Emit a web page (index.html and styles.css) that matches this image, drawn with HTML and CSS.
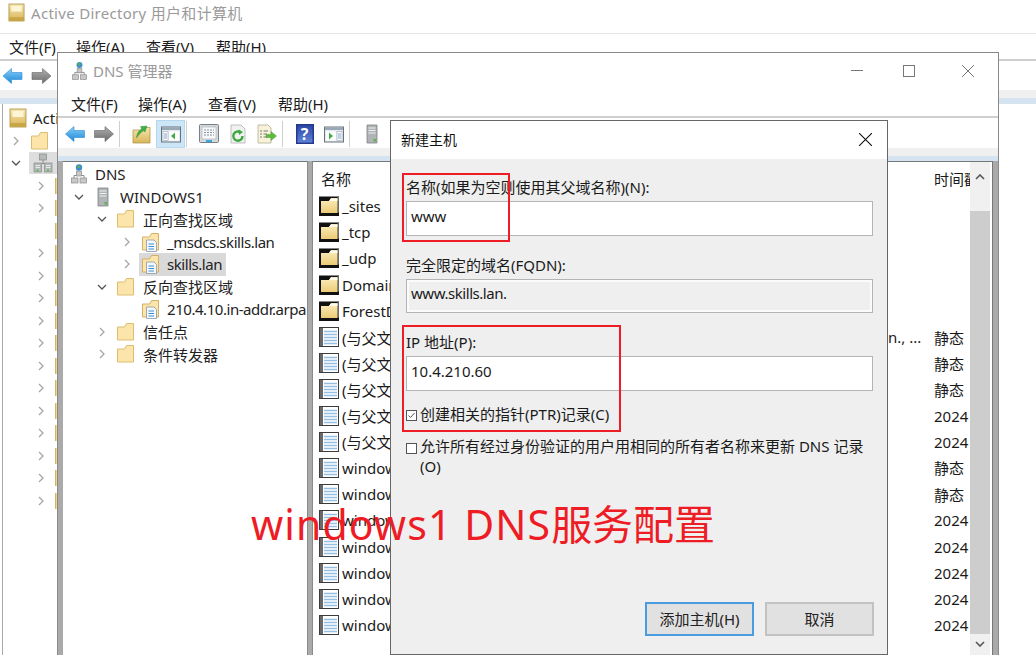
FILE: index.html
```html
<!DOCTYPE html>
<html lang="en">
<head>
    <meta charset="UTF-8">
    <title>DNS 管理器</title>
    <link rel="stylesheet" href="styles.css">
</head>
<body>

    <!-- shared icons -->
    <svg class="defs" width="0" height="0">
        <defs>
            <linearGradient id="blueArrow" x1="0" y1="0" x2="0" y2="1">
                <stop offset="0" stop-color="#8ad0f7"/>
                <stop offset="1" stop-color="#1b86d8"/>
            </linearGradient>
            <linearGradient id="grayArrow" x1="0" y1="0" x2="0" y2="1">
                <stop offset="0" stop-color="#b0b0b0"/>
                <stop offset="1" stop-color="#6c6c6c"/>
            </linearGradient>
            <linearGradient id="gold" x1="0" y1="0" x2="0" y2="1">
                <stop offset="0" stop-color="#f8e6b0"/>
                <stop offset="1" stop-color="#d8b558"/>
            </linearGradient>
            <linearGradient id="folderFill" x1="0" y1="0" x2="0" y2="1">
                <stop offset="0" stop-color="#fbeebd"/>
                <stop offset="1" stop-color="#eccb76"/>
            </linearGradient>
            <linearGradient id="helpFill" x1="0" y1="0" x2="0" y2="1">
                <stop offset="0" stop-color="#2c48a8"/>
                <stop offset="1" stop-color="#5f82d8"/>
            </linearGradient>
            <symbol id="i-back" viewBox="0 0 20 20">
                <path d="M0.5 10 L9 2.5 V6.5 H19.5 V13.5 H9 V17.5 Z" fill="url(#blueArrow)" stroke="#2b8bd6" stroke-width="0.6" stroke-linejoin="round"/>
            </symbol>
            <symbol id="i-forward" viewBox="0 0 20 20">
                <path d="M19.5 10 L11 2.5 V6.5 H0.5 V13.5 H11 V17.5 Z" fill="url(#grayArrow)" stroke="#666" stroke-width="0.6" stroke-linejoin="round"/>
            </symbol>
            <symbol id="i-folder" viewBox="0 0 20 20">
                <path d="M1.5 5 H8.5 L10.5 1.5 H17.5 V18 H1.5 Z" fill="#fbe5ab" stroke="#dcbd72"/>
            </symbol>
            <symbol id="i-zone" viewBox="0 0 20 20">
                <path d="M1.5 5 H8.5 L10.5 1.5 H17.5 V18 H1.5 Z" fill="#fbe5ab" stroke="#d2b066"/>
                <path d="M5.5 8 H13 L15.5 10.5 V19.5 H5.5 Z" fill="#f4f8fc" stroke="#8a97a6" stroke-width="0.8"/>
                <path d="M7.5 12 H13 M7.5 14.5 H13 M7.5 17 H13" stroke="#3f8fd0" stroke-width="1"/>
            </symbol>
            <symbol id="i-subfolder" viewBox="0 0 20 20">
                <rect y="0.5" width="20" height="19.5" fill="#111"/>
                <rect x="18.5" y="0.5" width="1.5" height="16" fill="#6b6b6b"/>
                <path d="M2 5 H10 L12 2.2 H18.5 V17 H2 Z" fill="url(#folderFill)"/>
                <path d="M12 2.2 H18.5 V5 H10 Z" fill="#fffbe8"/>
            </symbol>
            <symbol id="i-record" viewBox="0 0 20 20">
                <rect x="0.5" y="0.5" width="19" height="19" fill="#fff" stroke="#3c3c3c"/>
                <rect x="1" y="1" width="3" height="18" fill="#6a6a6a"/>
                <path d="M5 4.5 H18 M5 7.5 H18 M5 10.5 H18 M5 13.5 H18 M5 16.5 H18" stroke="#93bfe4" stroke-width="1.6"/>
            </symbol>
            <symbol id="i-server" viewBox="0 0 12 20">
                <path d="M1 1 H11 V19 H1 Z" fill="#b0b4b6" stroke="#7d8183" stroke-width="0.8"/>
                <path d="M2.5 4 H9.5 M2.5 6.5 H9.5 M2.5 9 H9.5" stroke="#eef0f0" stroke-width="1.2"/>
                <rect x="7.5" y="15" width="2.5" height="2.5" fill="#5fb24a"/>
            </symbol>
            <symbol id="i-network" viewBox="0 0 16 20">
                <circle cx="8" cy="3.5" r="3.2" fill="#3d8fd0"/>
                <path d="M6 2.5 C7 1 9 1.5 9.5 3 C8 5 7 4 6 2.5 Z" fill="#5fb24a"/>
                <path d="M8 7 V12 M3 14 V11.5 H13 V14" stroke="#8b8b8b" fill="none"/>
                <rect x="5.5" y="7" width="5" height="5" fill="#c8c8c8" stroke="#8b8b8b" stroke-width="0.7"/>
                <rect x="0.5" y="14" width="6.5" height="5" fill="#c8c8c8" stroke="#8b8b8b" stroke-width="0.7"/>
                <rect x="9" y="14" width="6.5" height="5" fill="#c8c8c8" stroke="#8b8b8b" stroke-width="0.7"/>
            </symbol>
            <symbol id="i-domains" viewBox="0 0 20 20">
                <path d="M10 6 V11 M4 13 V10.5 H16 V13" stroke="#8b8b8b" fill="none"/>
                <rect x="6.5" y="1" width="7" height="6" fill="#b4b9b9" stroke="#8b8b8b" stroke-width="0.7"/>
                <rect x="1" y="10" width="7.5" height="9" fill="#b4b9b9" stroke="#8b8b8b" stroke-width="0.7"/>
                <rect x="11.5" y="10" width="7.5" height="9" fill="#b4b9b9" stroke="#8b8b8b" stroke-width="0.7"/>
                <path d="M2.5 12.5 H7 M13 12.5 H17.5 M2.5 14.5 H7 M13 14.5 H17.5" stroke="#eceeee" stroke-width="0.9"/>
                <path d="M3.5 17.5 H5.5 M14 17.5 H16" stroke="#53c23a" stroke-width="1.6"/>
            </symbol>
            <symbol id="i-book" viewBox="0 0 18 20">
                <rect x="1" y="1" width="16" height="18" fill="url(#gold)" stroke="#a98c3c" stroke-width="0.8"/>
                <rect x="3.5" y="3" width="11" height="6" fill="#fdf6d6"/>
                <rect x="1" y="15" width="16" height="4" fill="#c8a646"/>
            </symbol>
            <symbol id="i-up" viewBox="0 0 20 20">
                <path d="M1 6 H9 L10 3.5 H18 V19 H1 Z" fill="url(#gold)" stroke="#a98c3c" stroke-width="0.7"/>
                <path d="M4.5 14 C5 9 7 6 10 5.2 L8.5 2.5 L15 2 L13 8 L11.5 6.8 C9 8 7 10.5 4.5 14 Z" fill="#3fae46" stroke="#2b8c33" stroke-width="0.4"/>
            </symbol>
            <symbol id="i-pane-left" viewBox="0 0 20 20">
                <rect x="0.5" y="3" width="19" height="15" fill="#e6ebf1" stroke="#68727c"/>
                <rect x="1" y="3.5" width="18" height="2.5" fill="#9aa7b4"/>
                <rect x="2" y="7.5" width="5" height="9" fill="#fff" stroke="#9aa7b4" stroke-width="0.6"/>
                <path d="M3 10 H6 M3 12 H6 M3 14 H6" stroke="#5a8fc4" stroke-width="0.8"/>
                <rect x="8" y="7.5" width="10" height="9" fill="#fff"/>
                <path d="M14 8.5 V15.5 L10 12 Z" fill="#3fae46"/>
            </symbol>
            <symbol id="i-pane-right" viewBox="0 0 20 20">
                <rect x="0.5" y="3" width="19" height="15" fill="#e6ebf1" stroke="#68727c"/>
                <rect x="1" y="3.5" width="18" height="2.5" fill="#9aa7b4"/>
                <rect x="13" y="7.5" width="5" height="9" fill="#fff" stroke="#9aa7b4" stroke-width="0.6"/>
                <path d="M14 10 H17 M14 12 H17 M14 14 H17" stroke="#5a8fc4" stroke-width="0.8"/>
                <rect x="2" y="7.5" width="10" height="9" fill="#fff"/>
                <path d="M5 8.5 V15.5 L9 12 Z" fill="#3fae46"/>
            </symbol>
            <symbol id="i-props" viewBox="0 0 20 20">
                <rect x="0.5" y="0.5" width="19" height="18" rx="1" fill="#d5d9dc" stroke="#7a7f84"/>
                <rect x="3" y="3" width="14" height="12" fill="#f6f8fa" stroke="#a7adb3" stroke-width="0.6"/>
                <path d="M5 6 H15 M5 8.5 H15 M5 11 H15" stroke="#7c8791" stroke-width="0.9" stroke-dasharray="2 1"/>
                <rect x="7" y="16" width="6" height="2" fill="#38a7e0"/>
            </symbol>
            <symbol id="i-refresh" viewBox="0 0 20 20">
                <path d="M3 1 H13 L17 5 V19 H3 Z" fill="#f1f2f0" stroke="#a5a8a6" stroke-width="0.7"/>
                <path d="M14.5 12 A4.6 4.6 0 1 1 12.5 8.3" fill="none" stroke="#3aa83f" stroke-width="2.4"/>
                <path d="M10.5 5.5 L15 8 L11 11 Z" fill="#3aa83f"/>
            </symbol>
            <symbol id="i-export" viewBox="0 0 20 20">
                <path d="M1 1 H11 L14 4 V19 H1 Z" fill="#f8f3d8" stroke="#a8a58a" stroke-width="0.7"/>
                <path d="M3 7 H5 M6.5 7 H11 M3 10 H5 M6.5 10 H10 M3 13 H5 M6.5 13 H10" stroke="#6c7076" stroke-width="0.9"/>
                <path d="M9 10.5 H14 V7.5 L19.5 12 L14 16.5 V13.5 H9 Z" fill="#5dbb3f" stroke="#3f962a" stroke-width="0.4"/>
            </symbol>
            <symbol id="i-help" viewBox="0 0 18 20">
                <rect x="0" y="0" width="18" height="20" fill="#24388c"/>
                <rect x="1.5" y="1.5" width="15" height="17" fill="url(#helpFill)"/>
            </symbol>
            <symbol id="chev-r" viewBox="0 0 8 10"><path d="M2 1 L6 5 L2 9" fill="none" stroke="#a6a6a6" stroke-width="1.3"/></symbol>
            <symbol id="chev-d" viewBox="0 0 10 8"><path d="M1 2 L5 6 L9 2" fill="none" stroke="#555" stroke-width="1.3"/></symbol>
        </defs>
    </svg>

    <div class="desktop">

        <!-- back window: Active Directory -->
        <section class="window ad-window">
            <header class="titlebar">
                <svg class="ad-title-icon"><use href="#i-book"/></svg>
                <span class="title-text ad-title-text">Active Directory 用户和计算机</span>
            </header>
            <nav class="menubar">
                <span>文件(F)</span>
                <span>操作(A)</span>
                <span>查看(V)</span>
                <span>帮助(H)</span>
            </nav>
            <div class="toolbar ad-toolbar">
                <svg class="arrow"><use href="#i-back"/></svg>
                <svg class="arrow"><use href="#i-forward"/></svg>
            </div>
            <div class="band"></div>
            <div class="ad-tree">
                <div class="ad-row ad-root"><svg class="ad-book"><use href="#i-book"/></svg><span>Active Directory</span></div>
                <div class="ad-row ad-lvl1"><svg class="chev"><use href="#chev-r"/></svg><svg class="icon"><use href="#i-folder"/></svg></div>
                <div class="ad-row ad-lvl1"><svg class="chev"><use href="#chev-d"/></svg><span class="ad-selected"><svg class="icon"><use href="#i-domains"/></svg></span></div>
                <div class="ad-row ad-lvl2"><svg class="chev"><use href="#chev-r"/></svg><span class="sliver"></span></div>
                <div class="ad-row ad-lvl2"><svg class="chev"><use href="#chev-r"/></svg><span class="sliver"></span></div>
                <div class="ad-row ad-lvl2"><svg class="chev blank"></svg><span class="sliver"></span></div>
                <div class="ad-row ad-lvl2"><svg class="chev"><use href="#chev-r"/></svg><span class="sliver"></span></div>
                <div class="ad-row ad-lvl2"><svg class="chev"><use href="#chev-r"/></svg><span class="sliver"></span></div>
                <div class="ad-row ad-lvl2"><svg class="chev"><use href="#chev-r"/></svg><span class="sliver"></span></div>
                <div class="ad-row ad-lvl2"><svg class="chev"><use href="#chev-r"/></svg><span class="sliver"></span></div>
                <div class="ad-row ad-lvl2"><svg class="chev"><use href="#chev-r"/></svg><span class="sliver"></span></div>
                <div class="ad-row ad-lvl2"><svg class="chev"><use href="#chev-r"/></svg><span class="sliver"></span></div>
                <div class="ad-row ad-lvl2"><svg class="chev"><use href="#chev-r"/></svg><span class="sliver"></span></div>
                <div class="ad-row ad-lvl2"><svg class="chev"><use href="#chev-r"/></svg><span class="sliver"></span></div>
                <div class="ad-row ad-lvl2"><svg class="chev"><use href="#chev-r"/></svg><span class="sliver"></span></div>
                <div class="ad-row ad-lvl2"><svg class="chev"><use href="#chev-r"/></svg><span class="sliver"></span></div>
                <div class="ad-row ad-lvl2"><svg class="chev"><use href="#chev-r"/></svg><span class="sliver"></span></div>
                <div class="ad-row ad-lvl2"><svg class="chev"><use href="#chev-r"/></svg><span class="sliver"></span></div>
            </div>
        </section>

        <!-- middle window: DNS manager -->
        <section class="window dns-window">
            <header class="titlebar dns-titlebar">
                <svg class="dns-title-icon"><use href="#i-network"/></svg>
                <span class="title-text">DNS 管理器</span>
                <div class="win-controls">
                    <span class="ctl-min"></span>
                    <span class="ctl-max"></span>
                    <svg class="ctl-close" viewBox="0 0 12 12"><path d="M0 0 L12 12 M12 0 L0 12" stroke="#777" fill="none"/></svg>
                </div>
            </header>
            <nav class="menubar dns-menubar">
                <span>文件(F)</span>
                <span>操作(A)</span>
                <span>查看(V)</span>
                <span>帮助(H)</span>
            </nav>
            <div class="toolbar dns-toolbar">
                <span class="tool"><svg><use href="#i-back"/></svg></span>
                <span class="tool"><svg><use href="#i-forward"/></svg></span>
                <span class="tool-sep"></span>
                <span class="tool"><svg><use href="#i-up"/></svg></span>
                <span class="tool tool-active"><svg><use href="#i-pane-left"/></svg></span>
                <span class="tool-sep"></span>
                <span class="tool"><svg><use href="#i-props"/></svg></span>
                <span class="tool"><svg><use href="#i-refresh"/></svg></span>
                <span class="tool"><svg><use href="#i-export"/></svg></span>
                <span class="tool-sep"></span>
                <span class="tool"><svg class="help-icon"><use href="#i-help"/></svg><b class="help-mark">?</b></span>
                <span class="tool"><svg><use href="#i-pane-right"/></svg></span>
                <span class="tool-sep"></span>
                <span class="tool"><svg><use href="#i-server"/></svg></span>
            </div>
            <div class="band"></div>
            <div class="dns-body">
                <aside class="dns-tree">
                    <div class="node node-root"><svg class="icon"><use href="#i-network"/></svg><span class="node-label">DNS</span></div>
                    <div class="node lvl1"><svg class="chev"><use href="#chev-d"/></svg><svg class="icon"><use href="#i-server"/></svg><span class="node-label">WINDOWS1</span></div>
                    <div class="node lvl2"><svg class="chev"><use href="#chev-d"/></svg><svg class="icon"><use href="#i-folder"/></svg><span class="node-label">正向查找区域</span></div>
                    <div class="node lvl3"><svg class="chev"><use href="#chev-r"/></svg><svg class="icon"><use href="#i-zone"/></svg><span class="node-label tight">_msdcs.skills.lan</span></div>
                    <div class="node lvl3"><svg class="chev"><use href="#chev-r"/></svg><span class="node-selected"><svg class="icon"><use href="#i-zone"/></svg><span class="node-label tight">skills.lan</span></span></div>
                    <div class="node lvl2"><svg class="chev"><use href="#chev-d"/></svg><svg class="icon"><use href="#i-folder"/></svg><span class="node-label">反向查找区域</span></div>
                    <div class="node lvl3"><svg class="chev blank"></svg><svg class="icon"><use href="#i-zone"/></svg><span class="node-label tight">210.4.10.in-addr.arpa</span></div>
                    <div class="node lvl2"><svg class="chev"><use href="#chev-r"/></svg><svg class="icon"><use href="#i-folder"/></svg><span class="node-label">信任点</span></div>
                    <div class="node lvl2"><svg class="chev"><use href="#chev-r"/></svg><svg class="icon"><use href="#i-folder"/></svg><span class="node-label">条件转发器</span></div>
                </aside>
                <main class="dns-list">
                    <div class="list-content">
                        <div class="list-head">
                            <span class="col-name">名称</span>
                            <span class="col-data"></span>
                            <span class="col-time">时间戳</span>
                        </div>
                        <div class="list-row"><span class="col-name"><svg><use href="#i-subfolder"/></svg>_sites</span><span class="col-data"></span><span class="col-time"></span></div>
                        <div class="list-row"><span class="col-name"><svg><use href="#i-subfolder"/></svg>_tcp</span><span class="col-data"></span><span class="col-time"></span></div>
                        <div class="list-row"><span class="col-name"><svg><use href="#i-subfolder"/></svg>_udp</span><span class="col-data"></span><span class="col-time"></span></div>
                        <div class="list-row"><span class="col-name"><svg><use href="#i-subfolder"/></svg>DomainDnsZones</span><span class="col-data"></span><span class="col-time"></span></div>
                        <div class="list-row"><span class="col-name"><svg><use href="#i-subfolder"/></svg>ForestDnsZones</span><span class="col-data"></span><span class="col-time"></span></div>
                        <div class="list-row"><span class="col-name"><svg><use href="#i-record"/></svg>(与父文件夹相同)</span><span class="col-data">n., ...</span><span class="col-time">静态</span></div>
                        <div class="list-row"><span class="col-name"><svg><use href="#i-record"/></svg>(与父文件夹相同)</span><span class="col-data"></span><span class="col-time">静态</span></div>
                        <div class="list-row"><span class="col-name"><svg><use href="#i-record"/></svg>(与父文件夹相同)</span><span class="col-data"></span><span class="col-time">静态</span></div>
                        <div class="list-row"><span class="col-name"><svg><use href="#i-record"/></svg>(与父文件夹相同)</span><span class="col-data"></span><span class="col-time">2024</span></div>
                        <div class="list-row"><span class="col-name"><svg><use href="#i-record"/></svg>(与父文件夹相同)</span><span class="col-data"></span><span class="col-time">2024</span></div>
                        <div class="list-row"><span class="col-name"><svg><use href="#i-record"/></svg>windows1</span><span class="col-data"></span><span class="col-time">静态</span></div>
                        <div class="list-row"><span class="col-name"><svg><use href="#i-record"/></svg>windows1</span><span class="col-data"></span><span class="col-time">静态</span></div>
                        <div class="list-row"><span class="col-name"><svg><use href="#i-record"/></svg>windows1</span><span class="col-data"></span><span class="col-time">2024</span></div>
                        <div class="list-row"><span class="col-name"><svg><use href="#i-record"/></svg>windows1</span><span class="col-data"></span><span class="col-time">2024</span></div>
                        <div class="list-row"><span class="col-name"><svg><use href="#i-record"/></svg>windows1</span><span class="col-data"></span><span class="col-time">2024</span></div>
                        <div class="list-row"><span class="col-name"><svg><use href="#i-record"/></svg>windows1</span><span class="col-data"></span><span class="col-time">2024</span></div>
                        <div class="list-row"><span class="col-name"><svg><use href="#i-record"/></svg>windows1</span><span class="col-data"></span><span class="col-time">2024</span></div>
                    </div>
                    <div class="scrollbar">
                        <svg class="scroll-arrow" viewBox="0 0 10 6"><path d="M1 5 L5 1 L9 5" fill="none" stroke="#555" stroke-width="1.6"/></svg>
                        <div class="scroll-thumb"></div>
                        <svg class="scroll-arrow scroll-arrow-down" viewBox="0 0 10 6"><path d="M1 1 L5 5 L9 1" fill="none" stroke="#555" stroke-width="1.6"/></svg>
                    </div>
                </main>
            </div>
        </section>

        <!-- front dialog -->
        <section class="window host-dialog">
            <header class="dialog-title">
                <span>新建主机</span>
                <svg class="dialog-close" viewBox="0 0 12 12"><path d="M0 0 L12 12 M12 0 L0 12" stroke="#111" fill="none"/></svg>
            </header>
            <form class="dialog-body">
                <label class="field-label">名称(如果为空则使用其父域名称)(N):</label>
                <div class="field">www</div>
                <label class="field-label">完全限定的域名(FQDN):</label>
                <div class="field field-readonly tight">www.skills.lan.</div>
                <label class="field-label">IP 地址(P):</label>
                <div class="field">10.4.210.60</div>
                <div class="check check-first">
                    <svg class="checkbox" viewBox="0 0 11 11"><rect x="0.5" y="0.5" width="10" height="10" fill="#fff" stroke="#555"/><path d="M2.5 5.5 L4.5 7.5 L8.5 3" fill="none" stroke="#555"/></svg>
                    <span>创建相关的指针(PTR)记录(C)</span>
                </div>
                <div class="check check-second">
                    <svg class="checkbox" viewBox="0 0 11 11"><rect x="0.5" y="0.5" width="10" height="10" fill="#fff" stroke="#555"/></svg>
                    <span>允许所有经过身份验证的用户用相同的所有者名称来更新 DNS 记录(O)</span>
                </div>
                <div class="dialog-buttons">
                    <button type="button" class="btn btn-default">添加主机(H)</button>
                    <button type="button" class="btn">取消</button>
                </div>
            </form>
        </section>

        <!-- red marks added on top of the screenshot -->
        <div class="mark mark-name"></div>
        <div class="mark mark-ip"></div>
        <div class="caption"><span class="caption-latin">windows1 DNS</span>服务配置</div>

    </div>

</body>
</html>
```

FILE: styles.css
```css
* {
    box-sizing: border-box;
}

body {
    margin: 0;
    background: #fff;
    color: #1a1a1a;
    font-family: "Noto Sans", "Noto Sans CJK SC", sans-serif;
    font-size: 15px;
}

.defs {
    position: absolute;
}

.desktop {
    position: relative;
    width: 1036px;
    height: 655px;
    overflow: hidden;
    background: #fff;
}

/* windows sit on a free canvas */
.window {
    position: absolute;
    background: #fff;
}

.title-text {
    color: #9a9a9a;
}

.tight {
    letter-spacing: -0.45px;
}

.menubar {
    display: flex;
    align-items: center;
    white-space: nowrap;
}

.menubar span {
    width: 70px;
}

.menubar span:first-child {
    width: 67px;
}

.band {
    height: 13px;
    background: linear-gradient(#f0f0f0 0, #f0f0f0 8px, #d6e4f2 8px);
}

/* Active Directory window */
.ad-window {
    left: 0;
    top: 0;
    width: 1036px;
    height: 655px;
}

.ad-window .titlebar {
    display: flex;
    align-items: center;
    height: 34px;
    padding: 0 0 8px 8px;
    border-bottom: 1px solid #e6e6e6;
}

.ad-title-icon {
    width: 17px;
    height: 19px;
    margin-right: 6px;
}

.ad-title-text {
    letter-spacing: 0.3px;
}

.ad-window .menubar {
    height: 27px;
    padding: 0 0 0 9px;
    border-bottom: 2px solid #cfcfcf;
}

.ad-toolbar {
    display: flex;
    align-items: center;
    height: 29px;
    gap: 8px;
    padding-left: 2px;
}

.arrow {
    width: 21px;
    height: 20px;
}

.ad-tree {
    height: 560px;
    margin-left: 2px;
    padding-top: 3px;
    border-left: 1px solid #aaa;
}

.ad-window .band {
    height: 14px;
}

.ad-row {
    display: flex;
    align-items: center;
    height: 22.5px;
}

.ad-row .icon {
    flex: none;
    width: 20px;
    height: 20px;
}

.ad-root {
    padding-left: 6px;
}

.ad-book {
    width: 18px;
    height: 20px;
    margin-right: 6px;
}

.ad-lvl1 {
    padding-left: 8px;
}

.ad-lvl2 {
    padding-left: 33px;
}

.ad-lvl1 > .icon {
    margin-left: 9px;
}

.ad-selected {
    display: flex;
    justify-content: center;
    align-items: center;
    width: 28px;
    height: 22px;
    margin-left: 8px;
    background: #dedede;
}

.chev {
    flex: none;
    width: 10px;
    height: 10px;
}

.sliver {
    width: 3px;
    height: 16px;
    margin-left: 9px;
    background: #f2d78f;
    border-left: 1px solid #d4b568;
}

/* DNS manager window */
.dns-window {
    left: 57px;
    top: 52px;
    width: 942px;
    height: 620px;
    border: 1px solid #8a8a8a;
    border-bottom: 0;
}

.dns-titlebar {
    display: flex;
    align-items: center;
    height: 38px;
    padding: 0 0 3px 14px;
}

.dns-title-icon {
    width: 15px;
    height: 20px;
    margin-right: 6px;
}

.win-controls {
    display: flex;
    align-items: center;
    margin-left: auto;
    padding-right: 24px;
}

.ctl-min {
    width: 12px;
    height: 1px;
    background: #777;
    margin-right: 40px;
}

.ctl-max {
    width: 12px;
    height: 12px;
    border: 1px solid #777;
    margin-right: 47px;
}

.ctl-close {
    width: 12px;
    height: 12px;
}

.dns-menubar {
    height: 27px;
    padding-left: 13px;
    border-bottom: 2px solid #cfcfcf;
}

.dns-toolbar {
    display: flex;
    align-items: center;
    height: 30px;
    padding: 1px 0 0 2px;
}

.tool {
    position: relative;
    display: flex;
    justify-content: center;
    align-items: center;
    width: 29px;
    height: 28px;
}

.tool svg {
    width: 20px;
    height: 20px;
}

.tool .help-icon {
    width: 18px;
}

.help-mark {
    position: absolute;
    inset: 0;
    text-align: center;
    line-height: 28px;
    color: #fff;
    font-size: 16px;
}

.tool-active {
    background: #cde6f7;
    border: 1px solid #b5d8ef;
}

.tool-sep {
    width: 1px;
    height: 26px;
    margin: 0 7px 0 1px;
    background: #cfcfcf;
}

.dns-body {
    display: flex;
    height: 500px;
    background: #aaa;
    padding-left: 5px;
    padding-right: 5px;
}

.dns-tree {
    flex: none;
    width: 245px;
    padding-top: 1px;
    background: #fff;
    border-top: 1px solid #777;
    border-right: 1px solid #8a8a8a;
    overflow: hidden;
    white-space: nowrap;
}

.node {
    display: flex;
    align-items: center;
    height: 22.5px;
    color: #222;
}

.node .icon {
    flex: none;
    width: 20px;
    height: 20px;
    margin-right: 7px;
}

.node .chev {
    margin: 0 9px 0 11px;
}

.node-root {
    padding-left: 6px;
}

.node-root .icon,
.lvl3 .icon {
    margin-right: 6px;
}

.lvl2 {
    padding-left: 23px;
}

.lvl3 {
    padding-left: 48px;
}

.node-selected {
    display: flex;
    align-items: center;
    height: 23px;
    padding: 0 4px 0 2px;
    margin-left: -2px;
    background: #d9d9d9;
}

.dns-list {
    display: flex;
    flex: 1;
    margin-left: 4px;
    padding-right: 2px;
    background: #fff;
    border-top: 1px solid #777;
    border-left: 1px solid #8a8a8a;
    border-right: 1px solid #777;
    overflow: hidden;
}

.list-content {
    flex: 1;
    min-width: 0;
    overflow: hidden;
    padding-left: 6px;
}

.list-head,
.list-row {
    display: grid;
    grid-template-columns: 568px 47px 40px;
    align-items: center;
    white-space: nowrap;
}

.list-head {
    height: 31px;
    padding-top: 2px;
}

.list-head .col-name {
    padding-left: 2px;
}

.list-row {
    height: 26.2px;
}

.col-name {
    display: flex;
    align-items: center;
    overflow: hidden;
}

.col-name svg {
    flex: none;
    width: 20px;
    height: 20px;
    margin-right: 3px;
}

.col-data {
    padding-left: 1px;
    overflow: hidden;
}

.scrollbar {
    flex: none;
    display: flex;
    flex-direction: column;
    width: 20px;
    background: #f0f0f0;
}

.scroll-arrow {
    flex: none;
    width: 10px;
    height: 6px;
    margin: 12px auto;
}

.scroll-arrow-down {
    margin-top: 7px;
}

.scroll-thumb {
    flex: none;
    height: 423px;
    margin-top: 19px;
    background: #cdcdcd;
}

/* New host dialog */
.host-dialog {
    left: 390px;
    top: 120px;
    width: 498px;
    height: 535px;
    background: #efefef;
    border: 1px solid #666;
}

.dialog-title {
    display: flex;
    align-items: center;
    justify-content: space-between;
    height: 38px;
    padding: 0 15px 2px 10px;
    background: #fff;
    font-size: 14px;
    color: #111;
}

.dialog-close {
    width: 13px;
    height: 13px;
}

.dialog-body {
    padding: 14px 14px 0 15px;
}

.field-label {
    display: block;
    height: 28px;
    line-height: 28px;
}

.field {
    display: flex;
    align-items: center;
    height: 35px;
    padding: 0 0 6px 4px;
    margin-bottom: 15px;
    background: #fff;
    border: 1px solid #b4b4b4;
}

.field-readonly {
    height: 34px;
    background: #efefef;
    box-shadow: inset 0 0 0 2px #fbfbfb;
}

.check {
    display: flex;
    gap: 3px;
}

.checkbox {
    flex: none;
    width: 11px;
    height: 11px;
    margin-top: 7px;
}

.check-first {
    margin-top: -3px;
}

.check-second {
    margin-top: 12px;
    line-height: 20px;
}

.dialog-buttons {
    display: flex;
    gap: 11px;
    justify-content: flex-end;
    margin-top: 126px;
    margin-right: -1px;
}

.btn {
    width: 109px;
    height: 34px;
    padding: 0 0 2px;
    background: #e1e1e1;
    border: 2px solid #c2c2c2;
    color: #222;
    font-family: inherit;
    font-size: 15px;
}

.btn-default {
    border-color: #4a9be0;
}

/* annotations */
.mark {
    position: absolute;
    border: 2px solid #ee1c25;
}

.mark-name {
    left: 402px;
    top: 173px;
    width: 108px;
    height: 69px;
}

.mark-ip {
    left: 402px;
    top: 325px;
    width: 219px;
    height: 107px;
}

.caption {
    position: absolute;
    left: 251px;
    top: 494px;
    color: #ee1c25;
    font-size: 41px;
    line-height: 60px;
    white-space: nowrap;
}

.caption-latin {
    letter-spacing: 1.1px;
}
```
